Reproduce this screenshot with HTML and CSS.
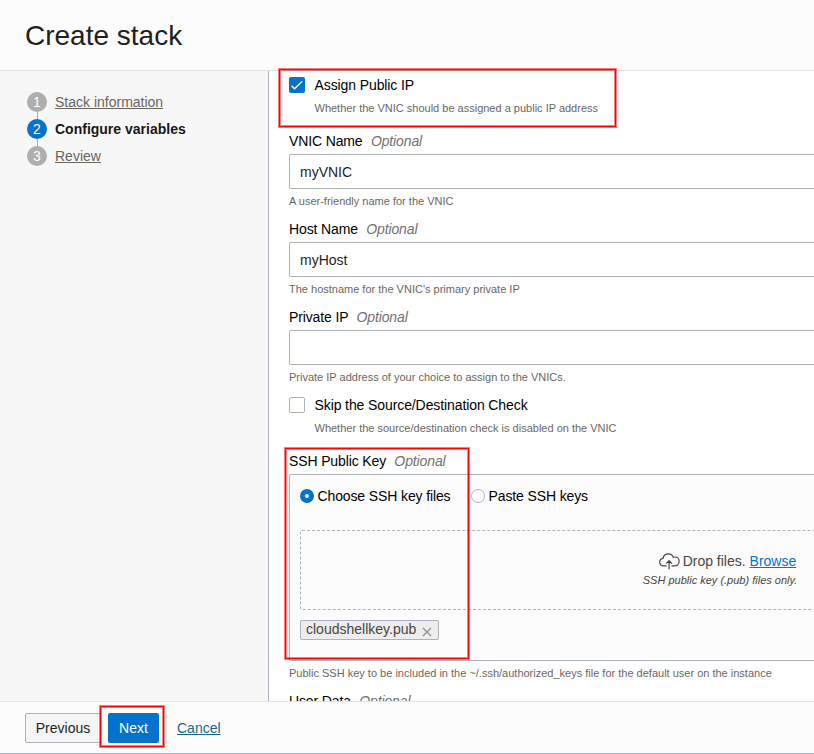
FILE: index.html
```html
<!DOCTYPE html>
<html lang="en">
<head>
<meta charset="utf-8">
<title>Create stack</title>
<link rel="stylesheet" href="styles.css">
</head>
<body>
<header class="header"><h1>Create stack</h1></header>
<div class="body">
  <nav class="sidebar">
    <ol class="steps">
      <li class="step"><span class="num">1</span><a class="step-link">Stack information</a></li>
      <li class="step active"><span class="num">2</span><span class="step-current">Configure variables</span></li>
      <li class="step"><span class="num">3</span><a class="step-link">Review</a></li>
    </ol>
  </nav>
  <main class="main">
    <div class="form">
      <section class="check-field">
        <div class="check-row">
          <span class="checkbox checked"><svg width="16" height="16" viewBox="0 0 16 16"><path d="M2.5 8.8l3 3L13.2 4.4" fill="none" stroke="#fff" stroke-width="1.3"/></svg></span>
          <span>Assign Public IP</span>
        </div>
        <p class="hint">Whether the VNIC should be assigned a public IP address</p>
      </section>
      <section class="field">
        <div class="label">VNIC Name <i>Optional</i></div>
        <div class="input">myVNIC</div>
        <p class="hint">A user-friendly name for the VNIC</p>
      </section>
      <section class="field">
        <div class="label">Host Name <i>Optional</i></div>
        <div class="input">myHost</div>
        <p class="hint">The hostname for the VNIC's primary private IP</p>
      </section>
      <section class="field">
        <div class="label">Private IP <i>Optional</i></div>
        <div class="input"></div>
        <p class="hint">Private IP address of your choice to assign to the VNICs.</p>
      </section>
      <section class="check-field">
        <div class="check-row"><span class="checkbox"></span><span>Skip the Source/Destination Check</span></div>
        <p class="hint">Whether the source/destination check is disabled on the VNIC</p>
      </section>
      <section class="field">
        <div class="label">SSH Public Key <i>Optional</i></div>
        <div class="panel">
          <div class="radios">
            <div class="radio-item first"><span class="radio on"></span><span>Choose SSH key files</span></div>
            <div class="radio-item"><span class="radio"></span><span>Paste SSH keys</span></div>
          </div>
          <div class="drop">
            <div class="drop-text">
              <div class="drop-main">
                <svg class="cloud" width="21" height="17" viewBox="0 0 21 17" fill="none" stroke="#4a4540" stroke-width="1.2"><path d="M7.6 12.9H4.7C2.400 12.900.7 11.200.7 9.100C.7 7.100 2 5.700 4 5.400C4.500 2.700 6.700.8 9.400.8C11.700.8 13.500 2 14.300 4.300C14.900 4.100 15.400 4 16 4C18.400 4 20.200 5.900 20.200 8.300C20.200 10.900 18.300 12.900 15.800 12.900H12.500M10.100 16.200V7.800M7.200 10.600L10.100 7.700L13 10.600"/></svg>
                <span>Drop files. <a class="browse">Browse</a></span>
              </div>
              <div class="drop-sub">SSH public key (.pub) files only.</div>
            </div>
          </div>
          <div class="chip"><span>cloudshellkey.pub</span><svg width="10" height="10" viewBox="0 0 10 10"><path d="M1 1l8 8M9 1L1 9" stroke="#8e8e8e" stroke-width="1.2"/></svg></div>
        </div>
        <p class="hint">Public SSH key to be included in the ~/.ssh/authorized_keys file for the default user on the instance</p>
      </section>
      <section class="field">
        <div class="label">User Data <i>Optional</i></div>
      </section>
    </div>
  </main>
</div>
<footer class="footer">
  <button class="btn">Previous</button>
  <button class="btn primary">Next</button>
  <a class="cancel">Cancel</a>
</footer>
<div class="mark mark-ip"></div>
<div class="mark mark-ssh"></div>
<div class="mark mark-next"></div>
</body>
</html>
```
FILE: styles.css
```css
* { box-sizing: border-box; }
body {
  margin: 0;
  width: 814px;
  height: 754px;
  overflow: hidden;
  position: relative;
  display: flex;
  flex-direction: column;
  background: #fff;
  color: #000;
  font: 14px/18px "Liberation Sans", Arial, sans-serif;
}
.header {
  height: 71px;
  flex: none;
  padding: 20px 25px 0;
  background: #fcfcfc;
  border-bottom: 1px solid #e3e3e3;
}
h1 { margin: 0; font-size: 28px; line-height: 32px; font-weight: 400; color: #221f1d; }
.body { display: flex; height: 630px; flex: none; overflow: hidden; }
.sidebar { width: 269px; flex: none; background: #f7f7f7; border-right: 1px solid #aeb2bd; }
.steps { list-style: none; margin: 0; padding: 21px 0 0 27px; }
.step { display: flex; align-items: center; height: 20px; margin-bottom: 7px; position: relative; }
.step + .step::before {
  content: "";
  position: absolute;
  left: 10px;
  top: -7px;
  width: 1px;
  height: 7px;
  background: #aaa;
}
.num {
  width: 20px;
  height: 20px;
  margin-right: 8px;
  border-radius: 50%;
  background: #aeaeae;
  color: #fff;
  text-align: center;
  line-height: 20px;
}
.active .num { background: #0572ce; }
.step-link { color: #6b6560; text-decoration: underline; }
.step-current { font-weight: 700; color: #1a1816; }
.main { flex: 1; min-width: 0; overflow: hidden; padding: 5px 0 0 20px; }
.form { width: 863px; }
.check-field { padding-bottom: 17px; }
.check-row { display: flex; align-items: center; gap: 9.5px; height: 18px; letter-spacing: -0.1px; }
.checkbox { width: 16px; height: 16px; border: 1px solid #aeb2bd; border-radius: 2px; background: #fff; }
.checkbox.checked { border: 0; background: #0572ce; }
.checkbox svg { display: block; }
.hint { margin: 5px 0 0; font-size: 11px; line-height: 14px; color: #6b6764; white-space: nowrap; }
.check-field .hint { margin: 7px 0 0 25.5px; }
.field { padding-bottom: 12px; }
.label { letter-spacing: -0.13px; }
.label i { margin-left: 4.6px; color: #757170; letter-spacing: -0.12px; }
.input {
  height: 35px;
  margin-top: 4px;
  padding: 0 10px;
  line-height: 34px;
  border: 1px solid #aeb2bd;
  border-radius: 2px;
  color: #221f1d;
}
.panel {
  height: 187px;
  margin-top: 4px;
  padding: 12px 10px 0;
  border: 1px solid #aeb2bd;
  border-radius: 2px;
  background: #fcfcfc;
}
.radios { display: flex; gap: 20px; white-space: nowrap; letter-spacing: -0.12px; }
.radio-item { display: flex; align-items: center; gap: 3.5px; }
.radio-item.first { width: 151px; }
.radio { width: 14px; height: 14px; flex: none; border: 1px solid #b4b4b8; border-radius: 50%; background: #fff; }
.radio.on { border: 5px solid #0572ce; }
.drop {
  height: 80px;
  margin-top: 25px;
  border: 1px dashed #b0b3b9;
  border-radius: 2px;
  display: flex;
  align-items: center;
  justify-content: center;
}
.drop-text { text-align: right; color: #4a4540; margin-right: 1px; }
.drop-main { display: flex; justify-content: flex-end; gap: 3px; height: 18px; padding-right: 1px; }
.cloud { margin-top: 1px; }
.browse { color: #0572ce; text-decoration: underline; }
.drop-sub { font-size: 11px; font-style: italic; line-height: 18px; padding-top: 1px; margin-bottom: -1px; }
.chip {
  display: flex;
  align-items: center;
  gap: 6px;
  width: 139px;
  height: 20px;
  margin-top: 10px;
  padding-left: 5px;
  line-height: 16px;
  background: #ededed;
  border: 1px solid #aeb2bd;
  border-radius: 2px;
  color: #4a4540;
}
.chip span { margin-top: -2px; }
.chip svg { margin-top: 3px; }
.footer {
  flex: none;
  height: 53px;
  padding: 11px 25px;
  display: flex;
  background: #fcfcfc;
  border-top: 1px solid #e3e3e3;
  border-bottom: 1px solid #aeb2bd;
}
.btn {
  height: 30px;
  width: 76px;
  padding: 0;
  font: inherit;
  color: #221f1d;
  background: #f5f5f5;
  border: 1px solid #aeb2bd;
  border-radius: 2px;
}
.btn.primary { width: 51px; margin-left: 7px; color: #fff; background: #0572ce; border: 0; }
.cancel { margin-left: 18px; line-height: 30px; color: #136a91; text-decoration: underline; }
.mark {
  position: absolute;
  border: 1px solid #ff0000;
  box-shadow: 0 0 0 1px rgba(255, 0, 0, 0.5), inset 0 0 0 1px rgba(255, 0, 0, 0.5);
}
.mark-ip { left: 279px; top: 69px; width: 337px; height: 58px; }
.mark-ssh { left: 285px; top: 448px; width: 184px; height: 211px; }
.mark-next { left: 100px; top: 706px; width: 64px; height: 41px; }
```
